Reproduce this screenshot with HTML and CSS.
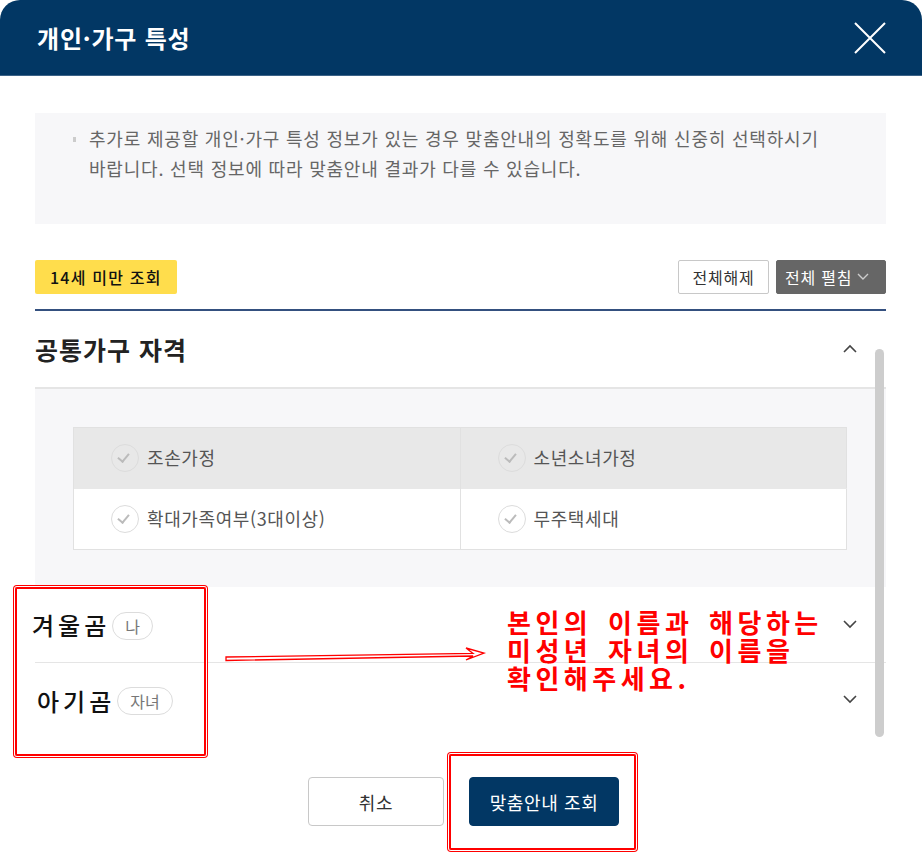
FILE: index.html
```html
<!DOCTYPE html>
<html lang="ko">
<head>
    <meta charset="UTF-8">
    <meta name="viewport" content="width=device-width, initial-scale=1.0">
    <title>개인·가구 특성</title>
    <link rel="stylesheet" href="styles.css">
</head>
<body>
    <div class="modal">
        <header class="modal-head">
            <h1>개인·가구 특성</h1>
            <button class="close-btn" type="button" aria-label="닫기">
                <svg width="32" height="32" viewBox="0 0 32 32">
                    <path d="M1 1 L31 31 M31 1 L1 31" stroke="#fff" stroke-width="2" fill="none"/>
                </svg>
            </button>
        </header>

        <main class="modal-body">
            <div class="notice">
                <p>추가로 제공할 개인·가구 특성 정보가 있는 경우 맞춤안내의 정확도를 위해 신중히 선택하시기<br>바랍니다. 선택 정보에 따라 맞춤안내 결과가 다를 수 있습니다.</p>
            </div>

            <div class="toolbar">
                <span class="badge-yellow">14세 미만 조회</span>
                <div class="toolbar-btns">
                    <button type="button" class="btn-line">전체해제</button>
                    <button type="button" class="btn-gray">전체 펼침
                        <svg width="12" height="8" viewBox="0 0 12 8"><path d="M1 1 L6 6 L11 1" stroke="#ccc" stroke-width="1.4" fill="none"/></svg>
                    </button>
                </div>
            </div>

            <div class="acc">
                <div class="acc-item open">
                    <div class="acc-head">
                        <h2>공통가구 자격</h2>
                        <svg class="chev" width="14" height="9" viewBox="0 0 14 9"><path d="M1 8 L7 2 L13 8" stroke="#444" stroke-width="1.6" fill="none"/></svg>
                    </div>
                    <div class="acc-panel">
                        <table class="check-table">
                            <tr class="dim">
                                <td><span class="chk"></span>조손가정</td>
                                <td><span class="chk"></span>소년소녀가정</td>
                            </tr>
                            <tr>
                                <td><span class="chk"></span>확대가족여부(3대이상)</td>
                                <td><span class="chk"></span>무주택세대</td>
                            </tr>
                        </table>
                    </div>
                </div>

                <div class="acc-item person">
                    <div class="acc-head">
                        <span class="name">겨울곰</span><span class="pill">나</span>
                        <svg class="chev" width="14" height="9" viewBox="0 0 14 9"><path d="M1 1 L7 7 L13 1" stroke="#444" stroke-width="1.6" fill="none"/></svg>
                    </div>
                </div>
                <div class="acc-item person last">
                    <div class="acc-head">
                        <span class="name name2">아기곰</span><span class="pill">자녀</span>
                        <svg class="chev" width="14" height="9" viewBox="0 0 14 9"><path d="M1 1 L7 7 L13 1" stroke="#444" stroke-width="1.6" fill="none"/></svg>
                    </div>
                </div>
            </div>

            <div class="btn-area">
                <button type="button" class="btn-cancel">취소</button>
                <button type="button" class="btn-submit">맞춤안내 조회</button>
            </div>
        </main>

        <div class="scrollbar"></div>

        <!-- annotations -->
        <div class="mark mark-names"></div>
        <div class="mark mark-submit"></div>
        <svg class="arrow" width="262" height="20" viewBox="0 0 262 20">
            <path d="M1 11 L248 7.5 L241 2 L259 7 L241 14 L248 10 L1 14.5 Z" fill="#fff" stroke="#f00" stroke-width="1.3" stroke-linejoin="miter"/>
        </svg>
        <p class="memo">본인의 이름과 해당하는<br>미성년 자녀의 이름을<br>확인해주세요.</p>
    </div>
</body>
</html>
```

FILE: styles.css
```css
body {
    margin: 0;
    padding: 0;
    background-color: #fff;
    font-family: "Noto Sans CJK KR", "Noto Sans", sans-serif;
    color: #333;
}

.modal {
    position: relative;
    width: 922px;
    height: 860px;
    overflow: hidden;
}

.modal-head {
    height: 76px;
    background-color: #023764;
    border-radius: 20px 20px 0 0;
    border-bottom: 1px solid #3b6287;
    box-sizing: border-box;
    display: flex;
    align-items: center;
    justify-content: space-between;
    padding: 0 36px 0 37px;
}

.modal-head h1 {
    margin: 0;
    color: #fff;
    font-size: 24px;
    font-weight: bold;
    letter-spacing: 0.8px;
}

.close-btn {
    background: none;
    border: none;
    padding: 0;
    width: 32px;
    height: 32px;
    cursor: pointer;
}

.modal-body {
    padding: 0 36px 0 35px;
}

.notice {
    margin-top: 37px;
    height: 111px;
    box-sizing: border-box;
    background-color: #f7f7f9;
    padding: 10px 20px 0 54px;
    position: relative;
}

.notice p {
    margin: 0;
    font-size: 18px;
    line-height: 30px;
    color: #666;
    letter-spacing: 0.8px;
    white-space: nowrap;
}

.notice::before {
    content: "";
    position: absolute;
    left: 38px;
    top: 24px;
    width: 3px;
    height: 5px;
    background-color: #ccc;
}

.toolbar {
    margin-top: 36px;
    height: 34px;
    display: flex;
    justify-content: space-between;
    align-items: center;
    padding-bottom: 15px;
    border-bottom: 2px solid #34507f;
}

.badge-yellow {
    display: inline-flex;
    align-items: center;
    height: 34px;
    padding: 0 15px;
    background-color: #ffdd4c;
    border-radius: 2px;
    font-size: 16px;
    font-weight: 500;
    color: #111;
    letter-spacing: 1.2px;
}

.toolbar-btns {
    display: flex;
    gap: 7px;
}

.btn-line,
.btn-gray {
    height: 34px;
    font-family: inherit;
    font-size: 16px;
    border-radius: 2px;
    padding: 0 8px;
    letter-spacing: 0.8px;
    cursor: pointer;
}

.btn-line {
    width: 91px;
    background-color: #fff;
    border: 1px solid #c8c8c8;
    color: #333;
}

.btn-gray {
    width: 110px;
    background-color: #666;
    border: 1px solid #666;
    color: #fff;
    display: flex;
    align-items: center;
    gap: 5px;
}

.acc-head {
    display: flex;
    align-items: center;
    position: relative;
}

.acc-item.open .acc-head {
    height: 76px;
    border-bottom: 2px solid #e5e5e5;
}

.acc-head h2 {
    margin: 0;
    font-size: 25px;
    font-weight: bold;
    color: #222;
    letter-spacing: 1px;
}

.chev {
    position: absolute;
    right: 29px;
    top: 50%;
    margin-top: -5px;
}

.acc-panel {
    background-color: #f7f7f9;
    padding: 38px 39px 37px 38px;
}

.check-table {
    width: 100%;
    border-collapse: collapse;
    border: 1px solid #e1e1e1;
    background-color: #fff;
}

.check-table td {
    width: 50%;
    height: 60px;
    padding: 0 0 0 37px;
    border-left: 1px solid #e1e1e1;
    font-size: 18px;
    color: #555;
    letter-spacing: 0.6px;
    vertical-align: middle;
}

.check-table tr + tr td {
    border-top: 1px solid #e8e8e8;
}

.check-table tr.dim td {
    background-color: #e8e8e8;
}

.chk {
    display: inline-block;
    width: 26px;
    height: 26px;
    border: 1px solid #dcdcdc;
    border-radius: 50%;
    background-color: #fff;
    vertical-align: middle;
    margin: -3px 8px 0 0;
    position: relative;
}

.dim .chk {
    background-color: #e8e8e8;
}

.chk::after {
    content: "";
    position: absolute;
    left: 8px;
    top: 6px;
    width: 5px;
    height: 9px;
    border-right: 2px solid #bbb;
    border-bottom: 2px solid #bbb;
    transform: rotate(40deg);
}

.acc-item.person .acc-head {
    height: 75px;
    border-bottom: 1px solid #e5e5e5;
}

.acc-item.person.last .acc-head {
    height: 74px;
    border-bottom: none;
}

.name {
    font-size: 24px;
    font-weight: 500;
    color: #111;
    margin-left: -3px;
    letter-spacing: 4px;
}

.name2 {
    margin-left: 2px;
    letter-spacing: 4px;
}

.pill {
    display: inline-flex;
    align-items: center;
    height: 26px;
    padding: 0 12px;
    margin-left: 2px;
    border: 1px solid #dcdcdc;
    border-radius: 14px;
    font-size: 16px;
    color: #777;
    margin-top: 2px;
}

.btn-area {
    margin-top: 40px;
    display: flex;
    justify-content: center;
    gap: 25px;
    padding-left: 6px;
}

.btn-cancel,
.btn-submit {
    height: 49px;
    font-family: inherit;
    font-size: 18px;
    letter-spacing: 0.6px;
    border-radius: 4px;
    cursor: pointer;
}

.btn-cancel {
    width: 136px;
    background-color: #fff;
    border: 1px solid #c8c8c8;
    color: #333;
}

.btn-submit {
    width: 150px;
    background-color: #023764;
    border: 1px solid #023764;
    color: #fff;
}

.scrollbar {
    position: absolute;
    left: 875px;
    top: 349px;
    width: 9px;
    height: 388px;
    border-radius: 5px;
    background-color: #cdcdcd;
}

/* red annotation marks */
.mark {
    position: absolute;
    border: 2px solid #f00;
    box-shadow: 0 0 0 1px #fff, 0 0 0 2px #f00;
    border-radius: 2px;
}

.mark-names {
    left: 15px;
    top: 587px;
    width: 187px;
    height: 165px;
}

.mark-submit {
    left: 449px;
    top: 754px;
    width: 183px;
    height: 92px;
}

.arrow {
    position: absolute;
    left: 225px;
    top: 646px;
}

.memo {
    position: absolute;
    left: 507px;
    top: 608px;
    margin: 0;
    color: #f00;
    font-size: 26px;
    font-weight: bold;
    line-height: 28px;
    letter-spacing: 4.5px;
    word-spacing: 4px;
}
```
